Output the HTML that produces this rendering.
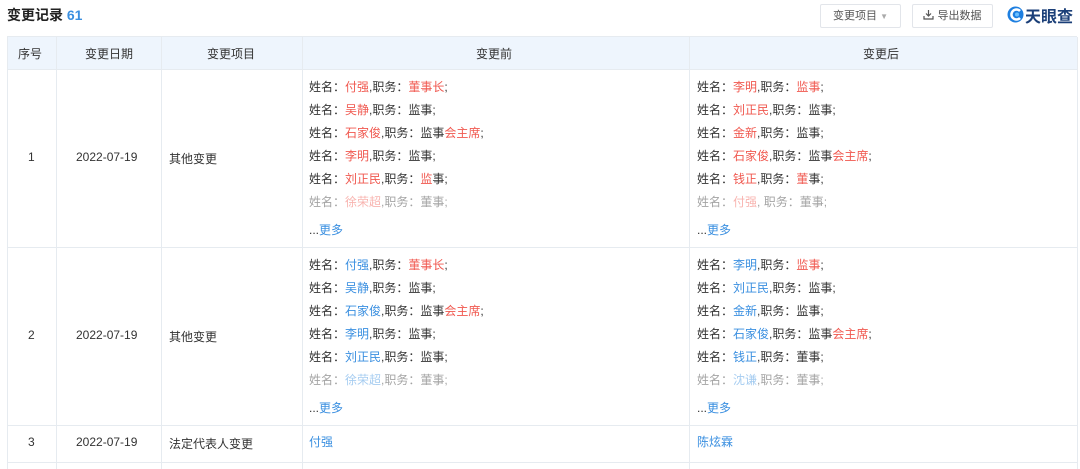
<!DOCTYPE html>
<html><head><meta charset="utf-8"><style>
*{margin:0;padding:0;box-sizing:border-box}
body{width:1080px;height:469px;overflow:hidden;background:#fff;font-family:"Liberation Sans","Noto Sans CJK SC",sans-serif;font-size:12px;color:#333;position:relative}
.a{position:absolute;white-space:nowrap}
.r{color:#f0584f}.b{color:#3a8fe0}
.f{opacity:.45}
.hl{position:absolute;left:7px;width:1070px;height:1px;background:#e6ebf0}
.vl{position:absolute;top:37px;width:1px;height:432px;background:#e6ebf0}
.btn{position:absolute;top:4px;height:24px;border:1px solid #e2e5ea;border-radius:2px;background:#fff;color:#555;font-size:11px;line-height:22px;text-align:center}
</style></head><body>
<div class="a" style="left:7px;top:5px;font-size:14px;font-weight:bold;color:#222">变更记录 <span style="color:#3a8fe0">61</span></div>
<div class="btn" style="left:820px;width:81px">变更项目 <span style="color:#aaa;font-size:8px">▼</span></div>
<div class="btn" style="left:912px;width:81px"><svg width="11" height="11" viewBox="0 0 11 11" style="vertical-align:-1px" fill="none" stroke="#555" stroke-width="1.2"><path d="M5.5 1v6M3 4.5l2.5 2.5 2.5-2.5M1 7v3h9V7"/></svg> 导出数据</div>
<svg class="a" style="left:1007px;top:6px" width="17" height="17" viewBox="0 0 17 17"><circle cx="8.5" cy="8.5" r="8" fill="#1e7fe0"/><path d="M13 5a5 5 0 1 0 0 7" fill="none" stroke="#fff" stroke-width="2.5"/><circle cx="10" cy="8.5" r="2" fill="#6cc0ff"/></svg>
<div class="a" style="left:1025px;top:3px;font-size:16px;font-weight:bold;color:#1b3f78">天眼查</div>

<div style="position:absolute;left:7px;top:37px;width:1070px;height:32px;background:#eef5fd"></div>
<div class="hl" style="top:36px"></div><div class="hl" style="top:69px"></div>
<div class="hl" style="top:247px"></div><div class="hl" style="top:425px"></div><div class="hl" style="top:462px"></div>
<div class="vl" style="left:7px"></div><div class="vl" style="left:56px"></div><div class="vl" style="left:161px"></div>
<div class="vl" style="left:302px"></div><div class="vl" style="left:689px"></div><div class="vl" style="left:1077px"></div>

<div class="a" style="left:18px;top:45px">序号</div>
<div class="a" style="left:85px;top:45px">变更日期</div>
<div class="a" style="left:207px;top:45px">变更项目</div>
<div class="a" style="left:476px;top:45px">变更前</div>
<div class="a" style="left:863px;top:45px">变更后</div>

<div class="a" style="left:28px;top:150px">1</div>
<div class="a" style="left:76px;top:150px">2022-07-19</div>
<div class="a" style="left:169px;top:150px">其他变更</div>
<div class="a" style="left:28px;top:328px">2</div>
<div class="a" style="left:76px;top:328px">2022-07-19</div>
<div class="a" style="left:169px;top:328px">其他变更</div>
<div class="a" style="left:28px;top:435px">3</div>
<div class="a" style="left:76px;top:435px">2022-07-19</div>
<div class="a" style="left:169px;top:435px">法定代表人变更</div>
<div class="a b" style="left:309px;top:433px">付强</div>
<div class="a b" style="left:697px;top:433px">陈炫霖</div>

<div class="a" style="left:309px;top:76px;line-height:23px">
姓名：<span class="r">付强</span>,职务：<span class="r">董事长</span>;<br>
姓名：<span class="r">吴静</span>,职务：监事;<br>
姓名：<span class="r">石家俊</span>,职务：监事<span class="r">会主席</span>;<br>
姓名：<span class="r">李明</span>,职务：监事;<br>
姓名：<span class="r">刘正民</span>,职务：<span class="r">监</span>事;<br>
<span class="f">姓名：<span class="r">徐荣超</span>,职务：董事;</span><br>
<span style="line-height:32px">...<span class="b">更多</span></span></div>
<div class="a" style="left:697px;top:76px;line-height:23px">
姓名：<span class="r">李明</span>,职务：<span class="r">监事</span>;<br>
姓名：<span class="r">刘正民</span>,职务：监事;<br>
姓名：<span class="r">金新</span>,职务：监事;<br>
姓名：<span class="r">石家俊</span>,职务：监事<span class="r">会主席</span>;<br>
姓名：<span class="r">钱正</span>,职务：<span class="r">董</span>事;<br>
<span class="f">姓名：<span class="r">付强</span>, 职务：董事;</span><br>
<span style="line-height:32px">...<span class="b">更多</span></span></div>

<div class="a" style="left:309px;top:254px;line-height:23px">
姓名：<span class="b">付强</span>,职务：<span class="r">董事长</span>;<br>
姓名：<span class="b">吴静</span>,职务：监事;<br>
姓名：<span class="b">石家俊</span>,职务：监事<span class="r">会主席</span>;<br>
姓名：<span class="b">李明</span>,职务：监事;<br>
姓名：<span class="b">刘正民</span>,职务：监事;<br>
<span class="f">姓名：<span class="b">徐荣超</span>,职务：董事;</span><br>
<span style="line-height:32px">...<span class="b">更多</span></span></div>
<div class="a" style="left:697px;top:254px;line-height:23px">
姓名：<span class="b">李明</span>,职务：<span class="r">监事</span>;<br>
姓名：<span class="b">刘正民</span>,职务：监事;<br>
姓名：<span class="b">金新</span>,职务：监事;<br>
姓名：<span class="b">石家俊</span>,职务：监事<span class="r">会主席</span>;<br>
姓名：<span class="b">钱正</span>,职务：董事;<br>
<span class="f">姓名：<span class="b">沈谦</span>,职务：董事;</span><br>
<span style="line-height:32px">...<span class="b">更多</span></span></div>
</body></html>
